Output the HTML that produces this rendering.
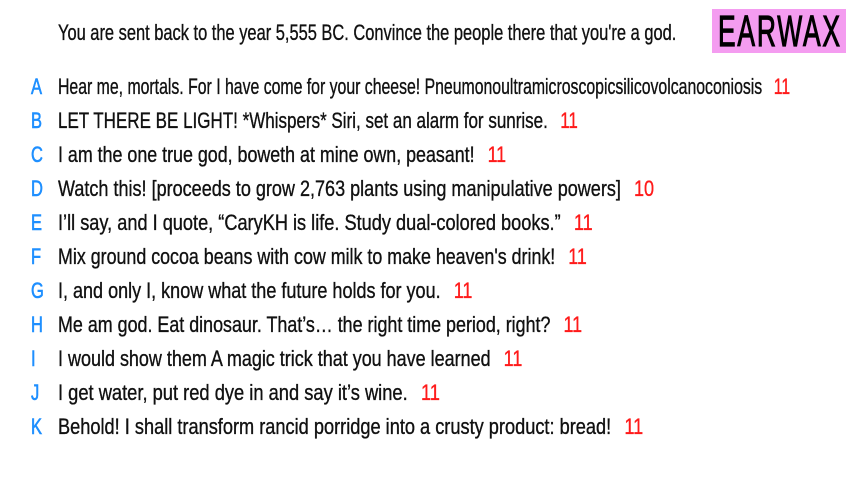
<!DOCTYPE html>
<html><head><meta charset="utf-8"><style>
html,body{margin:0;padding:0;background:#fff;width:853px;height:480px;overflow:hidden;font-family:"Liberation Sans",sans-serif;}
.s{transform:scaleX(0.81);transform-origin:0 50%;display:inline-block;-webkit-text-stroke:0.35px currentColor;}
.q{position:absolute;left:58px;top:18px;font-size:22px;color:#111;white-space:nowrap;line-height:30px;}
.logo{position:absolute;left:712px;top:9px;width:134px;height:44px;background:#f49cf0;overflow:hidden;}
.logo span{position:absolute;left:6px;top:0;font-size:44px;font-weight:normal;-webkit-text-stroke:1.2px #000;letter-spacing:3px;line-height:46px;color:#000;transform:scaleX(0.6);transform-origin:0 50%;white-space:nowrap;}
.row{position:absolute;left:0;height:30px;line-height:30px;font-size:22px;color:#111;white-space:nowrap;}
.l{position:absolute;left:31px;color:#1e8fff;transform:scaleX(0.75);-webkit-text-stroke:0.6px #1e8fff;}
.t{position:absolute;left:58px;}
.n{color:#ff1a1a;margin-left:16px;}
</style></head><body>
<div class="q"><span class="s" style="transform:scaleX(0.747)">You are sent back to the year 5,555 BC. Convince the people there that you're a god.</span></div>
<div class="logo"><span>EARWAX</span></div>
<div class="row" style="top:72px"><span class="l s">A</span><span class="t s" style="transform:scaleX(0.719)">Hear me, mortals. For I have come for your cheese! Pneumonoultramicroscopicsilicovolcanoconiosis<span class="n">11</span></span></div>
<div class="row" style="top:106px"><span class="l s">B</span><span class="t s" style="transform:scaleX(0.773)">LET THERE BE LIGHT! *Whispers* Siri, set an alarm for sunrise.<span class="n">11</span></span></div>
<div class="row" style="top:140px"><span class="l s">C</span><span class="t s" style="transform:scaleX(0.811)">I am the one true god, boweth at mine own, peasant!<span class="n">11</span></span></div>
<div class="row" style="top:174px"><span class="l s">D</span><span class="t s" style="transform:scaleX(0.82)">Watch this! [proceeds to grow 2,763 plants using manipulative powers]<span class="n">10</span></span></div>
<div class="row" style="top:208px"><span class="l s">E</span><span class="t s" style="transform:scaleX(0.826)">I’ll say, and I quote, “CaryKH is life. Study dual-colored books.”<span class="n">11</span></span></div>
<div class="row" style="top:242px"><span class="l s">F</span><span class="t s" style="transform:scaleX(0.811)">Mix ground cocoa beans with cow milk to make heaven's drink!<span class="n">11</span></span></div>
<div class="row" style="top:276px"><span class="l s">G</span><span class="t s" style="transform:scaleX(0.819)">I, and only I, know what the future holds for you.<span class="n">11</span></span></div>
<div class="row" style="top:310px"><span class="l s">H</span><span class="t s" style="transform:scaleX(0.813)">Me am god. Eat dinosaur. That’s… the right time period, right?<span class="n">11</span></span></div>
<div class="row" style="top:344px"><span class="l s">I</span><span class="t s" style="transform:scaleX(0.817)">I would show them A magic trick that you have learned<span class="n">11</span></span></div>
<div class="row" style="top:378px"><span class="l s">J</span><span class="t s" style="transform:scaleX(0.832)">I get water, put red dye in and say it’s wine.<span class="n">11</span></span></div>
<div class="row" style="top:412px"><span class="l s">K</span><span class="t s" style="transform:scaleX(0.827)">Behold! I shall transform rancid porridge into a crusty product: bread!<span class="n">11</span></span></div>
</body></html>
